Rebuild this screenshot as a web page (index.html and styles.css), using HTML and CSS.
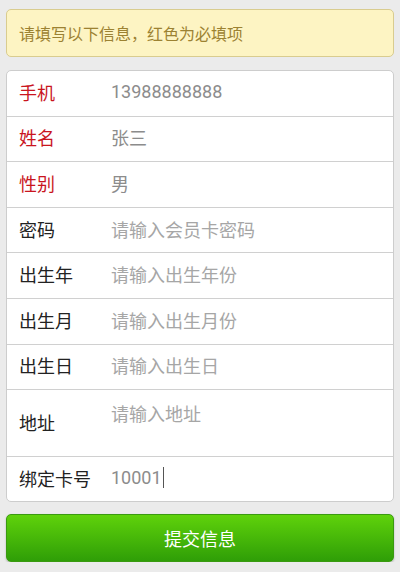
FILE: index.html
```html
<!DOCTYPE html>
<html lang="zh-CN">
<head>
    <meta charset="UTF-8">
    <meta name="viewport" content="width=device-width, initial-scale=1.0">
    <title>会员信息</title>
    <link rel="stylesheet" href="styles.css">
</head>
<body>
    <!-- Notice -->
    <div class="notice">请填写以下信息，红色为必填项</div>

    <!-- Form -->
    <div class="form-card">
        <div class="row">
            <span class="label required">手机</span>
            <span class="value">13988888888</span>
        </div>
        <div class="row">
            <span class="label required">姓名</span>
            <span class="value">张三</span>
        </div>
        <div class="row">
            <span class="label required">性别</span>
            <span class="value">男</span>
        </div>
        <div class="row">
            <span class="label">密码</span>
            <span class="value hint">请输入会员卡密码</span>
        </div>
        <div class="row">
            <span class="label">出生年</span>
            <span class="value hint">请输入出生年份</span>
        </div>
        <div class="row">
            <span class="label">出生月</span>
            <span class="value hint">请输入出生月份</span>
        </div>
        <div class="row">
            <span class="label">出生日</span>
            <span class="value hint">请输入出生日</span>
        </div>
        <div class="row address">
            <span class="label">地址</span>
            <span class="value hint">请输入地址</span>
        </div>
        <div class="row last">
            <span class="label">绑定卡号</span>
            <span class="value">10001<span class="caret"></span></span>
        </div>
    </div>

    <button class="submit">提交信息</button>
</body>
</html>
```

FILE: styles.css
```css
body {
    font-family: Roboto, "Noto Sans CJK SC", sans-serif;
    background: #ebebeb;
    margin: 0;
    padding: 9px 6px 0;
}

.notice {
    box-sizing: border-box;
    height: 48px;
    padding: 0 12px;
    display: flex;
    align-items: center;
    background: #fdf4c3;
    border: 1px solid #d9cc8f;
    border-radius: 5px;
    color: #9c8232;
    font-size: 16px;
}

.form-card {
    margin-top: 13px;
    background: #fff;
    border: 1px solid #cdcdcd;
    border-radius: 5px;
    overflow: hidden;
}

.row {
    box-sizing: border-box;
    height: 45.6px;
    padding-bottom: 3px;
    display: flex;
    align-items: center;
    border-bottom: 1px solid #d0d0d0;
    font-size: 18px;
}

.row.address {
    height: 67px;
    align-items: flex-start;
}

.row.address .label {
    align-self: center;
}

.row.address .value {
    padding-top: 10px;
}

.row.last {
    height: 44px;
    border-bottom: none;
}

.label {
    width: 92px;
    padding-left: 12px;
    color: #222;
    flex-shrink: 0;
}

.label.required {
    color: #c9151e;
}

.value {
    color: #8c8c8c;
    display: flex;
    align-items: center;
}

.value.hint {
    color: #a6a6a6;
}

.caret {
    display: inline-block;
    width: 1px;
    height: 21px;
    margin-left: 1px;
    background: #555;
}

.submit {
    display: block;
    width: 100%;
    height: 48px;
    margin-top: 12px;
    padding-bottom: 2px;
    border: 1px solid #3a9a10;
    border-radius: 5px;
    background: linear-gradient(#5fd20b, #2f9e07);
    box-shadow: 0 1px 2px rgba(0, 0, 0, 0.25);
    color: #fff;
    font-family: "Noto Sans CJK SC", sans-serif;
    font-size: 18px;
}
```
